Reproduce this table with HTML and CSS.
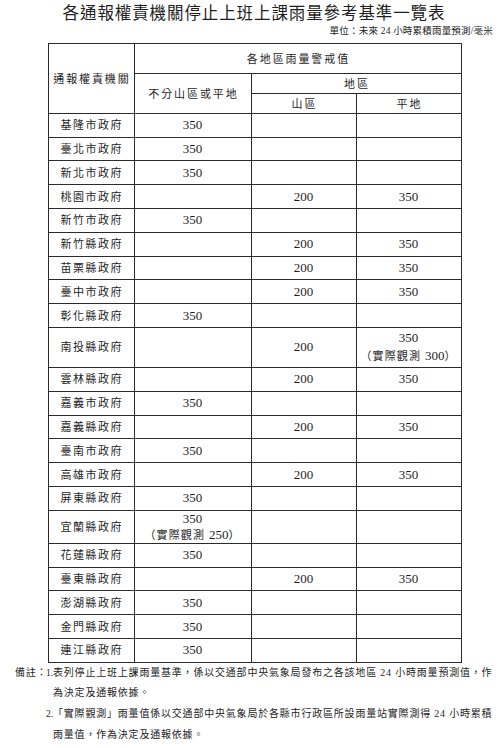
FILE: index.html
```html
<!DOCTYPE html>
<html lang="zh-Hant">
<head>
<meta charset="utf-8">
<title>各通報權責機關停止上班上課雨量參考基準一覽表</title>
<link rel="stylesheet" href="styles.css">
</head>
<body>
<div class="page">
  <h1 class="title">各通報權責機關停止上班上課雨量參考基準一覽表</h1>
  <div class="unit">單位：未來 24 小時累積雨量預測/毫米</div>
  <table class="grid">
    <colgroup>
      <col class="c1"><col class="c2"><col class="c3"><col class="c4">
    </colgroup>
    <thead>
      <tr class="h1">
        <th rowspan="3" class="hd">通報權責機關</th>
        <th colspan="3" class="hd">各地區雨量警戒值</th>
      </tr>
      <tr class="h2">
        <th rowspan="2" class="hd">不分山區或平地</th>
        <th colspan="2" class="hd">地區</th>
      </tr>
      <tr class="h3">
        <th class="hd">山區</th>
        <th class="hd">平地</th>
      </tr>
    </thead>
    <tbody>
      <tr><td class="name">基隆市政府</td><td>350</td><td></td><td></td></tr>
      <tr><td class="name">臺北市政府</td><td>350</td><td></td><td></td></tr>
      <tr><td class="name">新北市政府</td><td>350</td><td></td><td></td></tr>
      <tr><td class="name">桃園市政府</td><td></td><td>200</td><td>350</td></tr>
      <tr><td class="name">新竹市政府</td><td>350</td><td></td><td></td></tr>
      <tr><td class="name">新竹縣政府</td><td></td><td>200</td><td>350</td></tr>
      <tr><td class="name">苗栗縣政府</td><td></td><td>200</td><td>350</td></tr>
      <tr><td class="name">臺中市政府</td><td></td><td>200</td><td>350</td></tr>
      <tr><td class="name">彰化縣政府</td><td>350</td><td></td><td></td></tr>
      <tr class="tall"><td class="name">南投縣政府</td><td></td><td>200</td><td class="two">350<br><span class="obs">（實際觀測 <span class="obs-num">300</span>）</span></td></tr>
      <tr><td class="name">雲林縣政府</td><td></td><td>200</td><td>350</td></tr>
      <tr><td class="name">嘉義市政府</td><td>350</td><td></td><td></td></tr>
      <tr><td class="name">嘉義縣政府</td><td></td><td>200</td><td>350</td></tr>
      <tr><td class="name">臺南市政府</td><td>350</td><td></td><td></td></tr>
      <tr><td class="name">高雄市政府</td><td></td><td>200</td><td>350</td></tr>
      <tr><td class="name">屏東縣政府</td><td>350</td><td></td><td></td></tr>
      <tr class="mid"><td class="name">宜蘭縣政府</td><td class="two">350<br><span class="obs">（實際觀測 <span class="obs-num">250</span>）</span></td><td></td><td></td></tr>
      <tr><td class="name">花蓮縣政府</td><td>350</td><td></td><td></td></tr>
      <tr><td class="name">臺東縣政府</td><td></td><td>200</td><td>350</td></tr>
      <tr><td class="name">澎湖縣政府</td><td>350</td><td></td><td></td></tr>
      <tr><td class="name">金門縣政府</td><td>350</td><td></td><td></td></tr>
      <tr><td class="name">連江縣政府</td><td>350</td><td></td><td></td></tr>
    </tbody>
  </table>
  <div class="notes">
    <div class="notes-label">備註：</div>
    <div class="notes-items">
      <div class="note"><span class="note-num">1.</span><span class="note-text">表列停止上班上課雨量基準，係以交通部中央氣象局發布之各該地區 24 小時雨量預測值，作<br>為決定及通報依據。</span></div>
      <div class="note"><span class="note-num">2.</span><span class="note-text">「實際觀測」雨量值係以交通部中央氣象局於各縣市行政區所設雨量站實際測得 24 小時累積<br>雨量值，作為決定及通報依據。</span></div>
    </div>
  </div>
</div>
</body>
</html>
```
FILE: styles.css
```css
html, body {
  margin: 0;
  padding: 0;
  background: #ffffff;
}
body {
  font-family: "Liberation Serif", "Noto Sans CJK TC", serif;
  color: #1e1e1e;
}
.page {
  width: 500px;
  height: 748px;
  overflow: hidden;
}
.title {
  margin: 0;
  height: 26px;
  line-height: 27px;
  font-size: 16.5px;
  font-weight: 400;
  letter-spacing: 0.9px;
  text-align: center;
  padding-left: 8px;
}
.unit {
  height: 10px;
  line-height: 10px;
  font-size: 9.5px;
  text-align: right;
  padding-right: 7px;
  letter-spacing: 0.2px;
}
.grid {
  margin: 6.5px 0 0 47.5px;
  width: 413px;
  table-layout: fixed;
  border-collapse: collapse;
  font-size: 13px;
}
.c1 { width: 86px; }
.c2 { width: 117px; }
.c3 { width: 105px; }
.c4 { width: 105px; }
.grid th, .grid td {
  border: 1px solid #2b2b2b;
  padding: 0;
  text-align: center;
  vertical-align: middle;
  font-weight: 400;
  overflow: hidden;
  white-space: nowrap;
}
.hd {
  font-size: 11px;
  letter-spacing: 1.9px;
  text-indent: 1.9px;
}
.h1 { height: 30px; }
.h2 { height: 20.6px; }
.h3 { height: 19.7px; }
.grid tbody tr { height: 23.8px; }
.grid tbody tr.tall { height: 40px; }
.grid tbody tr.mid { height: 31.3px; }
.name {
  font-size: 11px;
  letter-spacing: 1.5px;
  text-indent: 1.5px;
}
.grid td { line-height: 16px; }
.tall .two { line-height: 18.7px; }
.mid .two { line-height: 16px; }
.obs {
  font-size: 11px;
  letter-spacing: 1.1px;
}
.obs-num {
  font-size: 13px;
  letter-spacing: 0;
}
.notes {
  display: flex;
  padding-left: 15px;
  font-size: 10px;
  line-height: 20.7px;
  letter-spacing: 0.8px;
  white-space: nowrap;
}
.notes-label {
  width: 31px;
  flex: none;
}
.notes-items {
  display: flex;
  flex-direction: column;
}
.note {
  display: flex;
}
.note-num {
  width: 7px;
  flex: none;
  font-size: 9.5px;
  letter-spacing: 0;
}
```
